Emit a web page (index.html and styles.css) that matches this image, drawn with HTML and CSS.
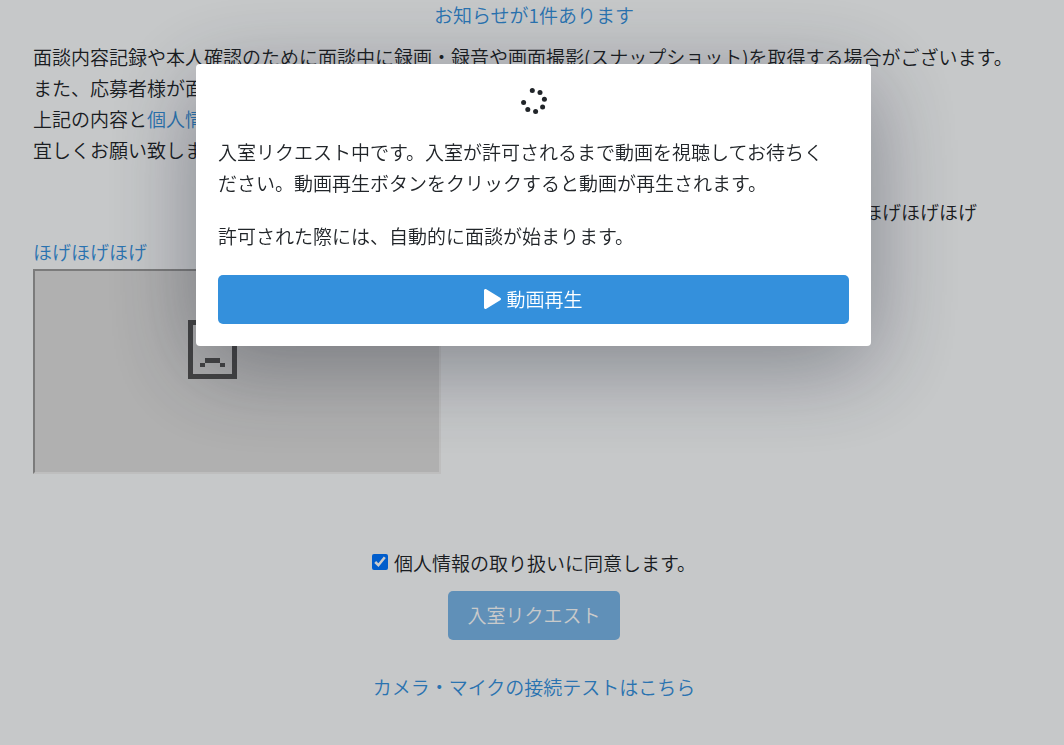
FILE: index.html
```html
<!DOCTYPE html>
<html lang="ja">
<head>
  <meta charset="UTF-8">
  <meta name="viewport" content="width=device-width, initial-scale=1.0">
  <title>面談入室</title>
  <link rel="stylesheet" href="styles.css">
</head>
<body>
  <main class="page">
    <div class="notice"><a href="#">お知らせが1件あります</a></div>

    <p class="terms">
      面談内容記録や本人確認のために面談中に録画・録音や画面撮影(スナップショット)を取得する場合がございます。<br>
      また、応募者様が面談<br>
      上記の内容と<a href="#">個人情報</a><br>
      宜しくお願い致します。
    </p>

    <p class="message">ほげほげほげ</p>

    <section class="movie">
      <a href="#">ほげほげほげ</a>
      <div class="frame">
        <svg width="49" height="59" viewBox="0 0 49 59" fill="#545454" shape-rendering="crispEdges">
          <path d="M0 0h34v5H5v49h39V15h5v44H0z"/>
          <path d="M29 5h5v10h10v5H29zM34 5h5v5h-5zM39 10h5v5h-5z"/>
          <path d="M17 38h15v5H17zM12 43h5v4h-5zM32 43h5v4h-5z"/>
        </svg>
      </div>
    </section>

    <form class="entry">
      <div class="agree">
        <input type="checkbox" id="agree" checked>
        <label for="agree">個人情報の取り扱いに同意します。</label>
      </div>
      <button type="button" class="btn" disabled>入室リクエスト</button>
    </form>

    <div class="test"><a href="#">カメラ・マイクの接続テストはこちら</a></div>
  </main>

  <div class="overlay">
    <div class="modal" role="dialog" aria-modal="true">
      <svg class="spinner" width="30" height="30" viewBox="0 0 30 30" fill="#212529">
        <circle cx="13.3" cy="4.4" r="2.5"/>
        <circle cx="21" cy="6.4" r="2.5"/>
        <circle cx="25.4" cy="13.3" r="2.5"/>
        <circle cx="23.6" cy="21" r="2.5"/>
        <circle cx="16.6" cy="25.4" r="2.5"/>
        <circle cx="8.8" cy="23.4" r="2.5"/>
        <circle cx="4.6" cy="16.4" r="2.5"/>
      </svg>
      <p>入室リクエスト中です。入室が許可されるまで動画を視聴してお待ちください。動画再生ボタンをクリックすると動画が再生されます。</p>
      <p>許可された際には、自動的に面談が始まります。</p>
      <button type="button" class="btn btn-block">
        <svg width="17" height="20" viewBox="0 0 17 20" fill="#fff">
          <path d="M0 1.500C0 .3 1.200-.4 2.300.2l13.900 8.500c1.100.6 1.100 2 0 2.600L2.300 19.800C1.200 20.400 0 19.700 0 18.500z"/>
        </svg>
        動画再生
      </button>
    </div>
  </div>
</body>
</html>
```
FILE: styles.css
```css
* { box-sizing: border-box; }
body { margin: 0; background-color: #f8fafc; color: #212529; font-family: "Noto Sans CJK JP", sans-serif; font-size: 19px; font-weight: 350; line-height: 31px; }
a { color: #3490dc; text-decoration: none; }
p { margin: 0; }

.page { min-height: 100vh; padding: 0 29px 40px 33px; }
.notice, .entry, .test { text-align: center; }
.notice { line-height: 29px; }
.terms { margin-top: 12px; }
.message { margin-top: 31px; padding-right: 58px; text-align: right; }

.movie { margin-top: 9px; }
.movie a { display: block; margin-bottom: 2px; }
.frame { display: flex; align-items: center; justify-content: center; width: 408px; height: 205px; padding: 0 49px 44px 0; background-color: #dcdcdc; border: 2px solid; border-color: #9a9a9a #eee #eee #9a9a9a; }

.entry { margin-top: 73px; }
.agree { display: flex; align-items: flex-start; justify-content: center; gap: 6px; margin-bottom: 13px; }
.agree input { width: 16px; height: 16px; margin: 7px 0 0; }

.btn { height: 49px; padding: 0 19px 2px; background-color: #3490dc; border: none; border-radius: 5px; color: #fff; font: inherit; }
.btn:disabled { opacity: 0.65; }
.btn-block { display: flex; align-items: center; justify-content: center; gap: 5px; width: 100%; }
.test { margin-top: 31px; }

.overlay { position: fixed; inset: 0; padding: 64px 193px 0 196px; background-color: rgba(0, 0, 0, 0.2); }
.modal { padding: 22px; background-color: #fff; border-radius: 4px; box-shadow: 0 20px 90px rgba(27, 33, 48, 0.4); }
.modal p { max-width: 32em; margin-bottom: 22px; }
.modal .btn { margin-top: 24px; }
.spinner { display: block; margin: 0 auto 20px; }
```
